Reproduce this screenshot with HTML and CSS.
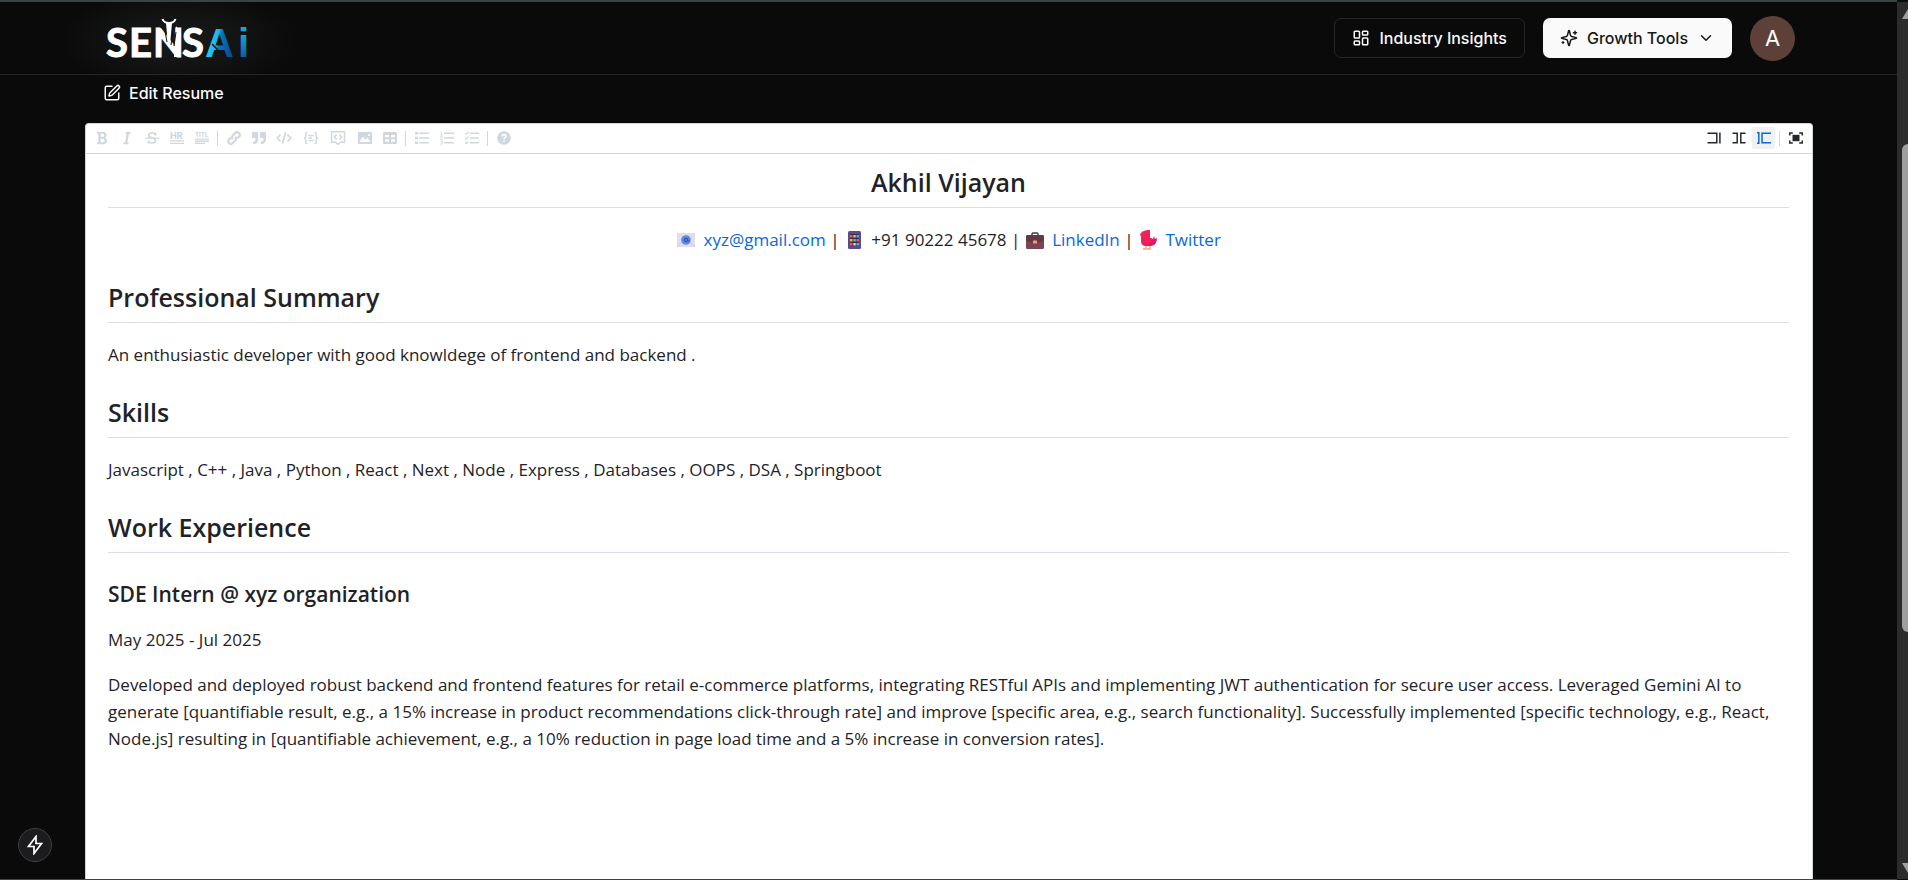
FILE: index.html
```html
<!DOCTYPE html>
<html lang="en">
<head>
<meta charset="utf-8">
<title>SENSAi – Resume</title>
<link rel="stylesheet" href="styles.css">
</head>
<body>
<svg class="defs" width="0" height="0" aria-hidden="true">
  <defs>
    <linearGradient id="aiA" x1="0" y1="0" x2="1" y2="0.3"><stop offset="0" stop-color="#0a7fb8"/><stop offset=".3" stop-color="#29c8ee"/><stop offset=".5" stop-color="#1fb4e6"/><stop offset=".6" stop-color="#0b74b8"/><stop offset="1" stop-color="#07509a"/></linearGradient>
    <linearGradient id="aiI" x1="0" y1="0" x2="0" y2="1"><stop offset="0.3" stop-color="#17a3dc"/><stop offset="1" stop-color="#07458f"/></linearGradient>
    <linearGradient id="bird" x1="0" y1="0" x2="1" y2="1"><stop offset="0" stop-color="#f5304a"/><stop offset="1" stop-color="#d6107c"/></linearGradient>
  </defs>
</svg>
<div class="page">
  <header class="header">
    <a class="logo" href="#" aria-label="SENSAi home">
      <svg width="144" height="58" viewBox="0 0 144 58">
        <g class="logo-text">
          <text class="logo-sens" x="1 24 48 77" y="48">SENS</text>
          <text class="logo-ai" x="100" y="48" fill="url(#aiA)">A</text>
          <text class="logo-ai" x="133" y="48" fill="url(#aiI)">i</text>
        </g>
        <path d="M107 35l6 6" stroke="#111" stroke-width="1.500" fill="none"/>
        <path d="M56 19l-5 8v4l5-3zM71 17l5 8-3 23h-4z" fill="#fff"/>
        <path d="M57.500 10c1 3 4 4 6.500 4s5.500-1 6.500-4" stroke="#fff" stroke-width="2" fill="none"/>
        <path d="M61 14h6l-2 22h-2z" fill="#fff"/>
        <path d="M59 17l3 16M69 16l-3 20M71 23l-2 14" stroke="#161616" stroke-width="1" fill="none"/>
      </svg>
    </a>
    <nav class="nav">
      <a class="btn btn-outline" href="#">
        <svg class="icon" viewBox="0 0 24 24"><rect x="3" y="3" width="7" height="9" rx="1"/><rect x="14" y="3" width="7" height="5" rx="1"/><rect x="14" y="12" width="7" height="9" rx="1"/><rect x="3" y="16" width="7" height="5" rx="1"/></svg>
        Industry Insights
      </a>
      <button class="btn btn-light" type="button">
        <svg class="icon" viewBox="0 0 24 24"><path d="M9.937 15.5A2 2 0 0 0 8.5 14.063l-6.135-1.582a.5.5 0 0 1 0-.962L8.5 9.936A2 2 0 0 0 9.937 8.5l1.582-6.135a.5.5 0 0 1 .963 0L14.063 8.5A2 2 0 0 0 15.5 9.937l6.135 1.581a.5.5 0 0 1 0 .964L15.5 14.063a2 2 0 0 0-1.437 1.437l-1.582 6.135a.5.5 0 0 1-.963 0z"/><path d="M20 3v4M22 5h-4M4 17v2M5 18H3"/></svg>
        Growth Tools
        <svg class="icon chevron" viewBox="0 0 24 24"><path d="m6 9 6 6 6-6"/></svg>
      </button>
      <button class="avatar" type="button" aria-label="Account">A</button>
    </nav>
  </header>

  <main class="main">
    <button class="edit" type="button">
      <svg class="icon" viewBox="0 0 24 24"><path d="M12 3H5a2 2 0 0 0-2 2v14a2 2 0 0 0 2 2h14a2 2 0 0 0 2-2v-7"/><path d="M18.375 2.625a1 1 0 0 1 3 3l-9.013 9.014a2 2 0 0 1-.853.505l-2.873.84a.5.5 0 0 1-.62-.62l.84-2.873a2 2 0 0 1 .506-.852z"/></svg>
      Edit Resume
    </button>

    <section class="editor">
      <div class="toolbar">
        <div class="tools">
          <button class="tool" type="button" disabled aria-label="Bold"><svg viewBox="0 0 384 512"><path d="M304.793 243.891c33.639-18.537 53.657-54.16 53.657-95.693 0-48.236-26.25-87.626-68.626-104.179C265.138 34.01 240.849 32 209.661 32H24c-8.837 0-16 7.163-16 16v33.049c0 8.837 7.163 16 16 16h33.113v318.53H24c-8.837 0-16 7.163-16 16V464c0 8.837 7.163 16 16 16h195.69c24.203 0 44.834-1.289 66.866-7.584C337.52 457.193 376 410.647 376 350.014c0-52.168-26.573-91.684-71.207-106.123zM142.217 100.809h67.444c16.294 0 27.536 2.019 37.525 6.717 15.828 8.479 24.906 26.502 24.906 49.446 0 35.029-20.32 56.79-53.029 56.79h-76.846V100.809zm112.642 305.475c-10.14 4.056-22.677 4.907-31.409 4.907h-81.233V281.943h84.367c39.645 0 63.057 25.38 63.057 63.057.001 28.425-13.66 52.483-34.782 61.284z"/></svg></button>
          <button class="tool" type="button" disabled aria-label="Italic"><svg viewBox="0 0 320 512"><path d="M204.758 416h-33.849l62.092-320h40.725a16 16 0 0 0 15.704-12.937l6.242-32C297.599 41.184 290.034 32 279.968 32H120.235a16 16 0 0 0-15.704 12.937l-6.242 32C96.362 86.816 103.927 96 113.993 96h33.846l-62.09 320H46.278a16 16 0 0 0-15.704 12.935l-6.245 32C22.402 470.815 29.967 480 40.034 480h158.479a16 16 0 0 0 15.704-12.935l6.245-32c1.927-9.88-5.638-19.065-15.704-19.065z"/></svg></button>
          <button class="tool" type="button" disabled aria-label="Strikethrough"><svg viewBox="0 0 14 14"><path class="ln" d="M10.5 4.5V1.6M10.3 3.8C9.600 2.300 8.300 2 7 2 5 2 3.700 2.900 3.700 4.300c0 1.400 1.300 2 3.300 2.600 2 .5 3.400 1.200 3.400 2.700S9 12 7 12c-1.500 0-2.900-.5-3.500-1.900M3.500 9.500v3" stroke-width="1.700"/><path d="M0 6.500h14v1.300H0z"/></svg></button>
          <button class="tool" type="button" disabled aria-label="Horizontal rule"><svg viewBox="0 0 14 14"><text x="0" y="8" class="glyph-hr">HR</text><path d="M0 9.200h14v1.200H0zM0 11.800h14V13H0z"/></svg></button>
          <button class="tool" type="button" disabled aria-label="Title"><svg viewBox="0 0 14 14"><text x="0" y="6" class="glyph-title">TITL</text><path d="M0 7.400h14v1.400H0zM0 9.600h14V11H0zM0 11.800h10v1.200H0z"/></svg></button>
          <span class="sep"></span>
          <button class="tool" type="button" disabled aria-label="Link"><svg viewBox="0 0 14 14"><path class="ln" d="M5.800 8.200a2.700 2.700 0 0 1 0-3.800l2.400-2.400a2.650 2.650 0 0 1 3.800 3.800l-1.400 1.400M8.200 5.800a2.700 2.700 0 0 1 0 3.800L5.800 12A2.650 2.650 0 0 1 2 8.200l1.400-1.400" stroke-width="2.200"/></svg></button>
          <button class="tool" type="button" disabled aria-label="Quote"><svg viewBox="0 0 512 512"><path d="M464 32H336c-26.500 0-48 21.500-48 48v128c0 26.500 21.500 48 48 48h80v64c0 35.300-28.700 64-64 64h-8c-13.300 0-24 10.700-24 24v48c0 13.300 10.700 24 24 24h8c88.400 0 160-71.600 160-160V80c0-26.500-21.500-48-48-48zm-288 0H48C21.500 32 0 53.500 0 80v128c0 26.500 21.500 48 48 48h80v64c0 35.300-28.700 64-64 64h-8c-13.300 0-24 10.700-24 24v48c0 13.300 10.700 24 24 24h8c88.400 0 160-71.600 160-160V80c0-26.500-21.500-48-48-48z"/></svg></button>
          <button class="tool wide" type="button" disabled aria-label="Code"><svg viewBox="0 0 16 14"><path class="ln" d="M4.500 3.500 1.200 7l3.300 3.500M11.500 3.500 14.800 7l-3.300 3.500M9.600 1.500l-3.200 11" stroke-width="1.800"/></svg></button>
          <button class="tool wide" type="button" disabled aria-label="Code block"><svg viewBox="0 0 16 14"><path class="ln" d="M4.500 1.500C2 1.500 2.800 3 2.800 5c0 1.300-.6 2-1.800 2 1.200 0 1.800.7 1.800 2 0 2-.8 3.500 1.700 3.500M11.500 1.500c2.500 0 1.700 1.500 1.700 3.500 0 1.300.6 2 1.800 2-1.200 0-1.800.7-1.800 2 0 2 .8 3.500-1.700 3.500M5.500 4.500h5M5.500 7h3.500M5.500 9.500h5" stroke-width="1.400"/></svg></button>
          <button class="tool wide" type="button" disabled aria-label="Comment"><svg viewBox="0 0 16 14"><path class="ln" d="M1.500.8h13v10.400h-4L8 13.400l-2.500-2.200h-4z" stroke-width="1.500"/><path class="ln" d="M6.700 3.500 4.500 6l2.200 2.500M9.300 3.500 11.500 6 9.300 8.500" stroke-width="1.600"/></svg></button>
          <button class="tool" type="button" disabled aria-label="Image"><svg viewBox="0 0 14 14"><path fill-rule="evenodd" d="M0 1h14v12H0zM1.500 11h11L9.500 6.500 7.500 9 5 5.500l-3.500 5zM11 3a1.100 1.100 0 1 0 .01 2.200A1.100 1.100 0 0 0 11 3z"/></svg></button>
          <button class="tool" type="button" disabled aria-label="Table"><svg viewBox="0 0 14 14"><path fill-rule="evenodd" d="M1.500 1h11A1.500 1.500 0 0 1 14 2.500v9a1.500 1.500 0 0 1-1.500 1.500h-11A1.500 1.500 0 0 1 0 11.500v-9A1.500 1.500 0 0 1 1.500 1zM2 4v2.300h4V4zm6 0v2.300h4V4zM2 8.300v2.400h4V8.300zm6 0v2.400h4V8.300z"/></svg></button>
          <span class="sep"></span>
          <button class="tool" type="button" disabled aria-label="Bulleted list"><svg viewBox="0 0 14 14"><path d="M0 1h3v2.500H0zM0 5.800h3v2.400H0zM0 10.500h3V13H0zM4 1.500h10V3H4zM4 6.300h10v1.500H4zM4 11h10v1.500H4z"/></svg></button>
          <button class="tool" type="button" disabled aria-label="Numbered list"><svg viewBox="0 0 14 14"><path d="M4 1.500h10V3H4zM4 6.300h10v1.500H4zM4 11h10v1.500H4z"/><path class="ln" d="M.5 1.200h1V4M.3 4h2.400M.4 5.700h2L.6 8.300h2.200M.4 10h2L1.500 11.300l1 .2v1.600H.3" stroke-width=".9"/></svg></button>
          <button class="tool" type="button" disabled aria-label="Task list"><svg viewBox="0 0 14 14"><path d="M5 1.500h9V3H5zM5 6.300h9v1.500H5zM5 11h9v1.500H5zM.5 10.700h2.200V13H.5z"/><path class="ln" d="m.2 2 1.200 1.300L3.700.8M.2 6.800l1.200 1.300 2.300-2.500" stroke-width="1.100"/></svg></button>
          <span class="sep"></span>
          <button class="tool" type="button" disabled aria-label="Help"><svg viewBox="0 0 14 14"><circle cx="7" cy="7" r="6.800"/><path class="ln knock" d="M5 5.300c.2-1.200 1-1.700 2-1.700s2 .7 2 1.700c0 1.400-2 1.300-2 2.900M7 9.400v1.500" stroke-width="1.600"/></svg></button>
        </div>
        <div class="tools">
          <button class="tool" type="button" aria-label="Edit only"><svg viewBox="0 0 14 14"><path class="ln" d="M.5 2.200h9.300v9.600H.5M12.900 1.500v11" stroke-width="1.500"/></svg></button>
          <button class="tool" type="button" aria-label="Split view"><svg viewBox="0 0 14 14"><path class="ln" d="M.5 2.200h4.700v9.600H.5M13.500 2.200H8.800v9.600h4.700" stroke-width="1.500"/></svg></button>
          <button class="tool active" type="button" aria-label="Preview"><svg viewBox="0 0 14 14"><path class="ln" d="M14 2.200H5v9.600h9M0 1.700h1.800v10.600H0" stroke-width="1.500"/></svg></button>
          <span class="sep"></span>
          <button class="tool" type="button" aria-label="Fullscreen"><svg viewBox="0 0 14 14"><path d="M3.500 3.800h7v6.400h-7z"/><path class="ln" d="M.8 4.600V2h3M10.200 2h3v2.600M.8 9.400V12h3M13.200 9.400V12h-3" stroke-width="1.500"/></svg></button>
        </div>
      </div>

      <article class="preview">
        <h2 class="name">Akhil Vijayan</h2>
        <p class="contact">
          <svg class="emoji" viewBox="0 0 18 20"><path d="M0 3h18v14H0z" fill="#e3dced"/><path d="M0 17l6-6M18 17l-6-6" stroke="#cfc3df" fill="none"/><circle cx="9" cy="10" r="4.800" fill="#5a8ddd"/><circle cx="9" cy="10" r="1.600" fill="none" stroke="#3a55b5" stroke-width="1.200"/><path d="M10.700 8.500v2.300c.2 1 1.500.7 1.500-1" stroke="#3a55b5" fill="none"/></svg>
          <a href="#">xyz@gmail.com</a> |
          <svg class="emoji" viewBox="0 0 18 20"><rect x="3" y="1" width="13" height="18" rx="1.500" fill="#5b4a8c"/><path d="M5 4h9v12H5z" fill="#3b2a55"/><path d="M5 5h2.500v2.500H5zM11.500 9H14v2.500h-2.500zM5 13h2.500v2.500H5z" fill="#e8623c"/><path d="M8.300 5h2.500v2.500H8.300zM5 9h2.500v2.500H5z" fill="#f7b53a"/><path d="M11.500 5H14v2.500h-2.500zM8.300 9h2.500v2.500H8.300zM11.500 13H14v2.500h-2.500z" fill="#4bb3e8"/><path d="M8.300 13h2.500v2.500H8.300z" fill="#e6e04a"/></svg>
          +91 90222 45678 |
          <svg class="emoji" viewBox="0 0 18 20"><path d="M6 6V4q0-1 1-1h4q1 0 1 1v2" stroke="#4c3541" stroke-width="1.500" fill="none"/><rect y="5" width="18" height="14" rx="1.500" fill="#7b4553"/><path d="M0 6.500Q0 5 1.500 5h15Q18 5 18 6.500V11q-9 3-18 0z" fill="#653845"/><rect x="7" y="10.500" width="4" height="3" rx=".5" fill="#f0a070"/></svg>
          <a href="#">LinkedIn</a> |
          <svg class="emoji" viewBox="0 0 18 20"><path d="M1 4 3.500 1.500Q6 0 9 0h2v8l3 1 1-3 1 3 2-1q0 7-6 8H7Q2 16 2 11V7z" fill="url(#bird)"/><path d="M9 0h2v8l3 1-5 6Q3 11 6 6z" fill="#f02058"/><path d="M7 16v3H4M11 16v3H8" stroke="#f3a36b" stroke-width="1.300" fill="none"/></svg>
          <a href="#">Twitter</a>
        </p>
        <h2>Professional Summary</h2>
        <p>An enthusiastic developer with good knowldege of frontend and backend .</p>
        <h2>Skills</h2>
        <p>Javascript , C++ , Java , Python , React , Next , Node , Express , Databases , OOPS , DSA , Springboot</p>
        <h2>Work Experience</h2>
        <h3>SDE Intern @ xyz organization</h3>
        <p>May 2025 - Jul 2025</p>
        <p>Developed and deployed robust backend and frontend features for retail e-commerce platforms, integrating RESTful APIs and implementing JWT authentication for secure user access. Leveraged Gemini AI to generate [quantifiable result, e.g., a 15% increase in product recommendations click-through rate] and improve [specific area, e.g., search functionality]. Successfully implemented [specific technology, e.g., React, Node.js] resulting in [quantifiable achievement, e.g., a 10% reduction in page load time and a 5% increase in conversion rates].</p>
      </article>
    </section>
  </main>
</div>

<button class="bolt" type="button" aria-label="Developer tools"><svg width="18" height="20" viewBox="0 0 18 20"><path d="M10 1.500 2.500 11.500H8v7L15.500 8.500H10z" fill="none" stroke="#fff" stroke-width="1.700"/></svg></button>

<div class="scrollbar" aria-hidden="true">
  <svg class="arrow" viewBox="0 0 6 12"><path d="M0 11 6 1v10z"/></svg>
  <span class="track"><span class="thumb"></span></span>
  <svg class="arrow" viewBox="0 0 6 12"><path d="M0 1h6v10z"/></svg>
</div>
</body>
</html>
```
FILE: styles.css
```css
* { box-sizing: border-box; }

body {
  margin: 0;
  background: #0a0a0a;
  color: #fafafa;
  font-family: Inter, "Liberation Sans", sans-serif;
  font-size: 16px;
}

button { font: inherit; color: inherit; border: 0; background: none; padding: 0; }
.defs { position: absolute; }

.page {
  display: flex;
  flex-direction: column;
  min-height: 100vh;
  margin-right: 11px;
  border-top: 2px solid #374446;
  border-bottom: 1px solid #444;
}

/* Header */
.header {
  display: flex;
  align-items: center;
  justify-content: space-between;
  height: 73px;
  padding: 0 102px;
  border-bottom: 1px solid #262626;
  background: radial-gradient(ellipse 120px 50px at 178px 38px, #1a1c1b, #0a0a0a);
}
.logo { display: block; margin-left: 3px; }
.logo svg { display: block; overflow: visible; }
.logo-text { font-family: Lato, sans-serif; font-weight: 700; font-size: 40px; fill: #fff; }
.logo-sens { stroke: #fff; stroke-width: 1; }
.logo-ai { font-family: "Liberation Sans", sans-serif; }

.nav { display: flex; align-items: center; gap: 18px; }
.btn {
  display: flex;
  align-items: center;
  gap: 9px;
  height: 40px;
  padding: 0 17px;
  border-radius: 7px;
  font-weight: 500;
  text-decoration: none;
  white-space: nowrap;
}
.btn-outline { border: 1px solid #262626; color: #fafafa; }
.btn-light { background: #fafafa; color: #171717; }
.icon { width: 18px; height: 18px; fill: none; stroke: currentColor; stroke-width: 2; stroke-linecap: round; stroke-linejoin: round; flex: none; }
.avatar { width: 45px; height: 45px; border-radius: 50%; background: #5d4037; color: #fff; font-size: 22px; }

/* Main */
.main { display: flex; flex-direction: column; flex: 1; padding: 0 84px 0 85px; }
.edit { display: flex; align-items: center; gap: 8px; height: 35px; padding: 0 18px; font-weight: 500; align-self: flex-start; }

.editor {
  flex: 1;
  margin-top: 13px;
  border: 1px solid #d0d7de;
  border-bottom: 0;
  border-radius: 4px 4px 0 0;
  background: #fff;
  color: #1f2328;
}
.toolbar { display: flex; justify-content: space-between; padding: 3px 4px 4px 3px; border-bottom: 1px solid #d0d7de; }
.tools { display: flex; align-items: center; }
.tool { display: flex; align-items: center; justify-content: center; width: 23px; height: 22px; margin: 0 1px; border-radius: 2px; color: #24292f; }
.tool:disabled { color: #d0d7de; }
.tool.wide { width: 24px; }
.tool svg { flex: none; height: 14px; width: 14px; fill: currentColor; }
.tool.wide svg { width: 16px; }
.tool .ln { fill: none; stroke: currentColor; }
.tool .knock { stroke: #fff; }
.tool.active { background: #eff1f3; color: #0969da; }
.glyph-hr { font: 800 9px Inter, sans-serif; }
.glyph-title { font: 800 6px Inter, sans-serif; }
.sep { width: 1px; height: 15px; margin: 0 3px; background: #d0d7de; }
.tool.wide + .tool { margin-left: 2px; }

.preview {
  padding: 11px 23px 11px 22px;
  font-family: "Open Sans", "Noto Sans", sans-serif;
  font-size: 17px;
  line-height: 27px;
}
.preview h2 { margin: 27px 0 18px; padding-bottom: 8px; border-bottom: 1px solid #d8dee4; font-size: 25px; line-height: 34px; font-weight: 600; }
.preview h2.name { margin-top: 0; text-align: center; }
.preview h3 { margin: 27px 0 18px; font-size: 21px; line-height: 28px; font-weight: 600; }
.preview p { margin: 0 0 18px; }
.preview a { color: #0969da; text-decoration: none; }
.contact { text-align: center; }
.emoji { width: 18px; height: 20px; margin: 0 4px 0 1px; vertical-align: -4px; }

/* Floating button */
.bolt {
  position: fixed;
  left: 18px;
  bottom: 18px;
  display: flex;
  align-items: center;
  justify-content: center;
  width: 34px;
  height: 34px;
  border: 1px solid #404042;
  border-radius: 50%;
  background: #1c1c1e;
}

/* Scrollbar */
.scrollbar {
  position: fixed;
  top: 2px;
  right: 0;
  bottom: 1px;
  display: flex;
  flex-direction: column;
  align-items: flex-end;
  width: 11px;
  padding: 6px 0 5px;
  background: #2c2c2c;
}
.arrow { flex: none; width: 6px; height: 12px; fill: #9f9f9f; }
.track { display: flex; flex-direction: column; flex: 1; width: 6px; }
.track::before { content: ""; flex: 124; }
.track::after { content: ""; flex: 230; }
.thumb { flex: 488; background: #9f9f9f; border-radius: 6px 0 0 6px; }
```
